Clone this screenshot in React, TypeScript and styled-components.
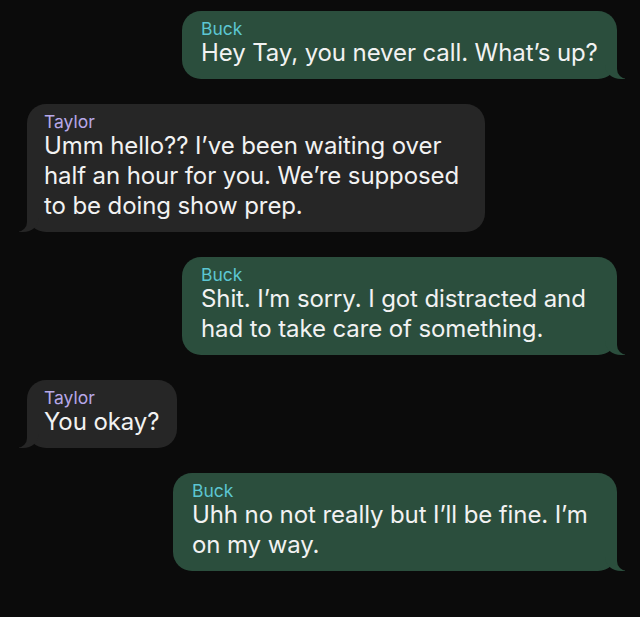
import React from "react";
import styled, { createGlobalStyle, css } from "styled-components";

const Global = createGlobalStyle`
  html, body { margin: 0; padding: 0; background: #0b0b0b; }
  body { font-family: Inter, "Noto Sans", sans-serif; -webkit-font-smoothing: antialiased; }
`;

const Thread = styled.div`
  display: flex;
  flex-direction: column;
  gap: 25px;
  padding: 11px 23px 0 27px;
  min-height: 617px;
  box-sizing: border-box;
  background: #0b0b0b;
`;

const Row = styled.div<{ $mine: boolean }>`
  display: flex;
  justify-content: ${(p) => (p.$mine ? "flex-end" : "flex-start")};
`;

const Bubble = styled.div<{ $mine: boolean; $width: number }>`
  position: relative;
  box-sizing: border-box;
  width: ${(p) => p.$width}px;
  border-radius: 19px;
  padding: ${(p) => (p.$mine ? "8px 12px 11px 19px" : "8px 12px 11px 17px")};
  background: ${(p) => (p.$mine ? "#2b4e3d" : "#262626")};
  color: #f2f2f2;

  &::before,
  &::after {
    content: "";
    position: absolute;
    bottom: 0;
    height: 22px;
  }

  ${(p) =>
    p.$mine
      ? css`
          &::before {
            right: -8px;
            width: 20px;
            background: #2b4e3d;
            border-bottom-left-radius: 16px 14px;
          }
          &::after {
            right: -26px;
            width: 26px;
            background: #0b0b0b;
            border-bottom-left-radius: 10px;
          }
        `
      : css`
          &::before {
            left: -8px;
            width: 20px;
            background: #262626;
            border-bottom-right-radius: 16px 14px;
          }
          &::after {
            left: -26px;
            width: 26px;
            background: #0b0b0b;
            border-bottom-right-radius: 10px;
          }
        `}
`;

const Name = styled.div<{ $mine: boolean }>`
  position: relative;
  z-index: 1;
  font-size: 17.5px;
  line-height: 19px;
  color: ${(p) => (p.$mine ? "#5cc6d2" : "#b7a8e8")};
`;

const Line = styled.div`
  position: relative;
  z-index: 1;
  font-size: 24px;
  line-height: 30px;
  white-space: nowrap;
  letter-spacing: -0.1px;
`;

type Msg = { from: "Buck" | "Taylor"; width: number; lines: string[] };

const messages: Msg[] = [
  { from: "Buck", width: 435, lines: ["Hey Tay, you never call. What\u2019s up?"] },
  {
    from: "Taylor",
    width: 458,
    lines: [
      "Umm hello?? I\u2019ve been waiting over",
      "half an hour for you. We\u2019re supposed",
      "to be doing show prep.",
    ],
  },
  {
    from: "Buck",
    width: 435,
    lines: ["Shit. I\u2019m sorry. I got distracted and", "had to take care of something."],
  },
  { from: "Taylor", width: 150, lines: ["You okay?"] },
  {
    from: "Buck",
    width: 444,
    lines: ["Uhh no not really but I\u2019ll be fine. I\u2019m", "on my way."],
  },
];

export default function App() {
  return (
    <>
      <Global />
      <Thread>
        {messages.map((m, i) => {
          const mine = m.from === "Buck";
          return (
            <Row key={i} $mine={mine}>
              <Bubble $mine={mine} $width={m.width}>
                <Name $mine={mine}>{m.from}</Name>
                {m.lines.map((l, j) => (
                  <Line key={j}>{l}</Line>
                ))}
              </Bubble>
            </Row>
          );
        })}
      </Thread>
    </>
  );
}
